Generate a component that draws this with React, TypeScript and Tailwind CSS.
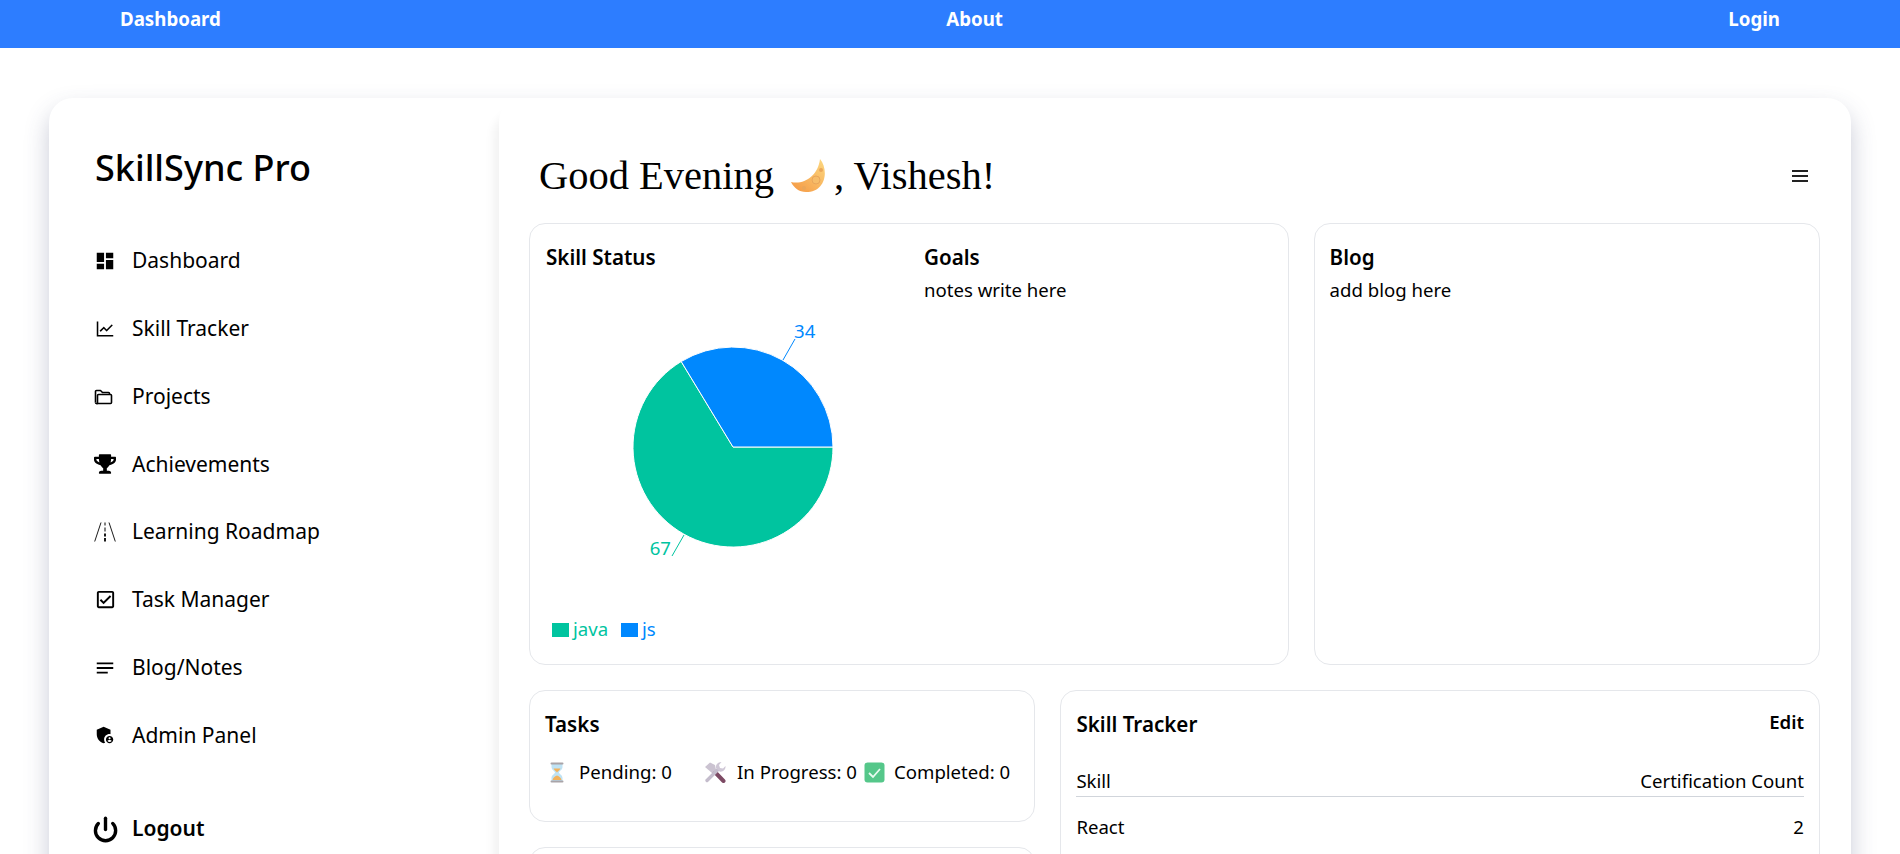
import React from "react";
import { MdDashboard, MdNotes, MdAdminPanelSettings, MdOutlineCheckBox } from "react-icons/md";
import { FaTrophy } from "react-icons/fa";
import { AiOutlineLineChart } from "react-icons/ai";
import { Power } from "lucide-react";

const sans = { fontFamily: '"Noto Sans", sans-serif' };

function FolderIcon() {
  return (
    <svg width="19" height="19" viewBox="0 0 19 19" fill="none" stroke="currentColor" strokeWidth="1.6" strokeLinejoin="round">
      <path d="M1.500 15.500V4.500a1 1 0 0 1 1-1h4l2 2h6a1 1 0 0 1 1 1v1" />
      <path d="M3.500 16.500h13a1 1 0 0 0 1-1v-7a1 1 0 0 0-1-1H4.500a1 1 0 0 0-1 1v8a1 1 0 0 1-1 0 1 1 0 0 1-1-1" />
    </svg>
  );
}

function RoadIcon() {
  return (
    <svg width="22" height="20" viewBox="0 0 22 20" fill="none" stroke="currentColor">
      <path d="M7 0.500 0.700 19.500M15 0.500l6.300 19" strokeWidth="0.9" />
      <path d="M11 0.500v3M11 5.500v4" strokeWidth="1" />
      <path d="M11 11.500v3M11 16v3.500" strokeWidth="1.800" />
    </svg>
  );
}

function MoonEmoji() {
  return (
    <svg width="38" height="36" viewBox="0 0 38 36" className="shrink-0">
      <defs>
        <linearGradient id="moon" x1="0.9" y1="0" x2="0.1" y2="1">
          <stop offset="0" stopColor="#fcd67e" />
          <stop offset="1" stopColor="#f59a45" />
        </linearGradient>
      </defs>
      <path d="M30 1C39 12 36 34 16 34 9 34 4 30 1 24 14 27 28 18 30 1z" fill="url(#moon)" />
      <circle cx="31" cy="12" r="2" fill="#eaa659" />
      <circle cx="26" cy="22" r="4" fill="#f6bc69" stroke="#e9a55a" />
      <circle cx="14" cy="30" r="2" fill="#eaa659" />
    </svg>
  );
}

function HourglassEmoji() {
  return (
    <svg width="16" height="21" viewBox="0 0 16 21" className="shrink-0">
      <path d="M2.500 2h11v3c0 3-3.500 4-3.500 5.500S13.500 13 13.500 16v3h-11v-3c0-3 3.500-4 3.500-5.500S2.500 8 2.500 5z" fill="#bfe3f5" />
      <path d="M4.500 6.500h7c-1 2-2.500 2.500-3.500 4-1-1.500-2.500-2-3.500-4zM3.500 18c.5-2.500 3-4 4.500-4.500 1.500.5 4 2 4.500 4.500z" fill="#f2b25c" />
      <rect x="1.500" y="0.500" width="13" height="2" rx="1" fill="#a9a4a8" />
      <rect x="1.500" y="18.500" width="13" height="2" rx="1" fill="#a9a4a8" />
    </svg>
  );
}

function ToolsEmoji() {
  return (
    <svg width="22" height="22" viewBox="0 0 22 22" className="shrink-0">
      <path d="M7 7 19.500 20" stroke="#7d4a64" strokeWidth="4" strokeLinecap="round" fill="none" />
      <path d="M1 6 6 1.500 11 4 12 9 8 12z" fill="#cbc3d1" />
      <path d="M3 19.500 14 8.500" stroke="#c4bccc" strokeWidth="3.400" strokeLinecap="round" fill="none" />
      <path d="M12 7c-.5-3.500 2-6 5.500-6l-2.500 3 1 3 3 .5 2.500-2.500c.5 3.500-3 6.500-6 5.500z" fill="#cfc7d6" />
    </svg>
  );
}

function CheckEmoji() {
  return (
    <svg width="21" height="21" viewBox="0 0 21 21" className="shrink-0">
      <rect x="0.500" y="0.500" width="20" height="20" rx="3" fill="#55c78a" />
      <path d="M5 11l4 4 7-8" fill="none" stroke="#e8fbf0" strokeWidth="1.800" />
    </svg>
  );
}

function Chart() {
  return (
    <svg width="340" height="400" viewBox="0 0 340 400" className="block" style={{ fontFamily: '"Noto Sans", sans-serif', fontSize: 18.600 }}>
      <path d="M200 185 L300 185 A100 100 0 1 1 148.200 99.500 Z" fill="#00C49F" stroke="#fff" />
      <path d="M200 185 L148.200 99.500 A100 100 0 0 1 300 185 Z" fill="#0088FE" stroke="#fff" />
      <path d="M250 98 L262 77" stroke="#0088FE" fill="none" />
      <path d="M151 273 L139 294" stroke="#00C49F" fill="none" />
      <text x="261" y="76" fill="#0088FE">34</text>
      <text x="138" y="293" textAnchor="end" fill="#00C49F">67</text>
      <rect x="19" y="361" width="17" height="14" fill="#00C49F" />
      <text x="40" y="374" fill="#00C49F">java</text>
      <rect x="88" y="361" width="17" height="14" fill="#0088FE" />
      <text x="109" y="374" fill="#0088FE">js</text>
    </svg>
  );
}

const nav: [React.ReactNode, string][] = [
  [<MdDashboard size={22} />, "Dashboard"],
  [<AiOutlineLineChart size={22} />, "Skill Tracker"],
  [<FolderIcon />, "Projects"],
  [<FaTrophy size={22} />, "Achievements"],
  [<RoadIcon />, "Learning Roadmap"],
  [<MdOutlineCheckBox size={23} />, "Task Manager"],
  [<MdNotes size={22} />, "Blog/Notes"],
  [<MdAdminPanelSettings size={22} />, "Admin Panel"],
];

export default function App() {
  return (
    <div className="h-[854px] overflow-hidden bg-white text-black" style={sans}>
      <header className="h-12 bg-[#2d7dff] px-[120px] flex justify-between text-white font-bold text-[18.700px] leading-[38px]">
        <span>Dashboard</span>
        <span>About</span>
        <span>Login</span>
      </header>

      <div className="mx-[49px] mt-[50px] flex rounded-t-[24px] bg-white shadow-[0_12px_24px_rgba(60,70,110,0.28)] h-[900px]">
        <aside className="w-[450px] shrink-0 pl-[46px] pt-[44px]">
          <h1 className="text-[36px] leading-[52px] font-medium">SkillSync Pro</h1>
          <ul className="mt-[33px] flex flex-col">
            {nav.map(([icon, label]) => (
              <li key={label} className="h-[67.800px] flex items-center text-[21px]">
                <span className="w-[38px] flex justify-start -ml-[1px]">{icon}</span>
                <span>{label}</span>
              </li>
            ))}
          </ul>
          <div className="mt-[44px] flex items-center text-[21px] font-semibold">
            <span className="w-[38px] -ml-[3px] mr-[2px]">
              <Power size={27} strokeWidth={3} />
            </span>
            Logout
          </div>
        </aside>

        <main className="flex-1 rounded-t-[24px] shadow-[-6px_14px_10px_rgba(0,0,0,0.05)] pl-[30px] pr-[31px]">
          <div className="mt-[57px] h-[68px] flex items-start justify-between">
            <h2 className="flex items-center h-[42px] pl-[10px] text-[40.500px] leading-[42px]" style={{ fontFamily: '"Liberation Serif", serif' }}>
              Good Evening
              <span className="ml-[16px] mr-[6px]"><MoonEmoji /></span>
              , Vishesh!
            </h2>
            <svg width="18" height="14" viewBox="0 0 18 14" className="mt-[14px] mr-[11px]" fill="none" stroke="#222" strokeWidth="2">
              <path d="M1 2h16M1 7h16M1 12h16" />
            </svg>
          </div>

          <div className="grid grid-cols-[3fr_2fr] gap-[25px]">
            <section className="h-[442px] rounded-[16px] border border-[#e5e7eb] flex">
              <div className="w-[379px] pl-[16px] pt-[19px] relative">
                <h3 className="text-[20.600px] leading-[28px] font-semibold">Skill Status</h3>
                <div className="absolute left-[3px] top-[38px]"><Chart /></div>
              </div>
              <div className="pt-[19px] pl-[15px]">
                <h3 className="text-[20.600px] leading-[28px] font-semibold">Goals</h3>
                <p className="mt-[6px] text-[18.600px] leading-[26px]">notes write here</p>
              </div>
            </section>
            <section className="h-[442px] rounded-[16px] border border-[#e5e7eb] pt-[19px] pl-[15px]">
              <h3 className="text-[20.600px] leading-[28px] font-semibold">Blog</h3>
              <p className="mt-[6px] text-[18.600px] leading-[26px]">add blog here</p>
            </section>
          </div>

          <div className="grid grid-cols-[2fr_3fr] gap-[25px] mt-[25px]">
            <div className="flex flex-col gap-[25px]">
              <section className="h-[132px] rounded-[16px] border border-[#e5e7eb] pt-[19px] pl-[15px]">
                <h3 className="text-[20.600px] leading-[28px] font-semibold">Tasks</h3>
                <div className="mt-[21px] flex items-center text-[18.600px] leading-[26px]">
                  <span className="ml-[4px] mr-[14px]"><HourglassEmoji /></span>
                  <span className="w-[125px]">Pending: 0</span>
                  <span className="mr-[11px]"><ToolsEmoji /></span>
                  <span className="w-[127px]">In Progress: 0</span>
                  <span className="mr-[9px]"><CheckEmoji /></span>
                  <span>Completed: 0</span>
                </div>
              </section>
              <section className="h-[132px] rounded-[16px] border border-[#e5e7eb]" />
            </div>
            <section className="rounded-[16px] border border-[#e5e7eb] px-[15px] pt-[19px] h-[300px]">
              <div className="flex justify-between items-start">
                <h3 className="text-[20.600px] leading-[28px] font-semibold">Skill Tracker</h3>
                <button className="text-[18.600px] leading-[24px] font-semibold">Edit</button>
              </div>
              <div className="mt-[30px] flex justify-between text-[18.600px] leading-[26px] border-b border-[#d1d5db] pb-[2px]">
                <span>Skill</span>
                <span>Certification Count</span>
              </div>
              <div className="mt-[17px] flex justify-between text-[18.600px] leading-[26px]">
                <span>React</span>
                <span>2</span>
              </div>
            </section>
          </div>
        </main>
      </div>
    </div>
  );
}
